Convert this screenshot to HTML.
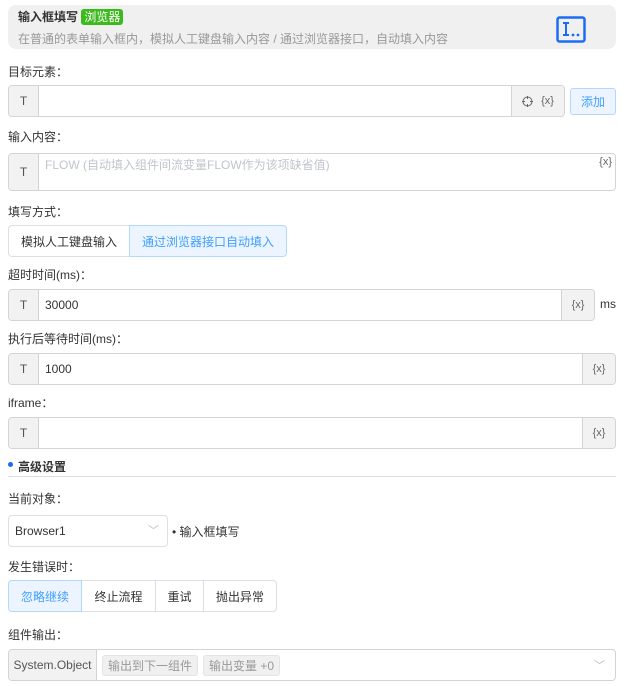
<!DOCTYPE html>
<html><head><meta charset="utf-8"><style>
*{box-sizing:border-box;margin:0;padding:0}
body{width:630px;height:686px;background:#fff;font-family:"Liberation Sans","Noto Sans CJK SC",sans-serif;font-size:12px;color:#333;position:relative;overflow:hidden}
.a{position:absolute}
.lbl{position:absolute;left:8px;font-size:12px;color:#333}
.inp{position:absolute;left:8px;border:1px solid #d4d4d4;border-radius:4px;height:32px;display:flex;align-items:center;background:#fff;overflow:hidden}
.t{width:30px;height:100%;background:#f2f2f2;border-right:1px solid #d4d4d4;display:flex;align-items:center;justify-content:center;color:#555;font-size:12px}
.ad{height:100%;background:#f2f2f2;border-left:1px solid #d4d4d4;display:flex;align-items:center;justify-content:center;color:#666;font-size:11px;position:absolute;right:0;top:0}
.v{padding-left:6px;color:#333}
.btn{position:absolute;height:32px;border:1px solid #dcdfe6;display:flex;align-items:center;justify-content:center;font-size:12px;color:#333;background:#fff}
.on{background:#ecf5ff;color:#409eff;border-color:#b3d8ff;z-index:1}
</style></head><body>
<div class="a" style="left:8px;top:5px;width:608px;height:44px;background:#f0f0f0;border-radius:8px"></div>
<div class="a" style="left:18px;top:9px;font-size:12px;font-weight:bold;color:#333;line-height:16px">输入框填写 <span style="background:#3cb91c;color:#fff;font-weight:normal;padding:1px 3px;border-radius:3px;font-size:12px">浏览器</span></div>
<div class="a" style="left:18px;top:30px;font-size:12px;color:#999">在普通的表单输入框内，模拟人工键盘输入内容 / 通过浏览器接口，自动填入内容</div>
<svg class="a" style="left:556px;top:16px" width="30" height="27" viewBox="0 0 30 27"><rect x="1.5" y="1.5" width="27" height="24" rx="2" fill="none" stroke="#1a6cf5" stroke-width="2.5"/><path d="M7 7h6M10 7v12M7 19h6" stroke="#1a6cf5" stroke-width="2" fill="none"/><circle cx="17" cy="19" r="1.4" fill="#1a6cf5"/><circle cx="22" cy="19" r="1.4" fill="#1a6cf5"/></svg>

<div class="lbl" style="top:63px">目标元素：</div>
<div class="inp" style="top:85px;width:557px"><div class="t">T</div><div class="ad" style="width:53px;gap:8px"><svg width="11" height="11" viewBox="0 0 11 11"><circle cx="5.5" cy="5.5" r="4.5" fill="none" stroke="#666"/><path d="M5.5 0v3M5.5 8v3M0 5.5h3M8 5.5h3" stroke="#666"/></svg><span>{x}</span></div></div>
<div class="btn" style="left:570px;top:88px;width:46px;height:27px;border-radius:3px;background:#ecf5ff;color:#409eff;border-color:#b3d8ff">添加</div>

<div class="lbl" style="top:128px">输入内容：</div>
<div class="inp" style="top:153px;width:608px;height:38px;align-items:stretch"><div class="t" style="height:auto">T</div><div style="padding:2px 6px;color:#c0c4cc">FLOW (自动填入组件间流变量FLOW作为该项缺省值)</div><div class="a" style="right:3px;top:2px;font-size:11px;color:#666">{x}</div></div>

<div class="lbl" style="top:203px">填写方式：</div>
<div class="btn" style="left:8px;top:225px;width:122px;border-radius:4px 0 0 4px">模拟人工键盘输入</div>
<div class="btn on" style="left:129px;top:225px;width:158px;border-radius:0 4px 4px 0">通过浏览器接口自动填入</div>

<div class="lbl" style="top:266px">超时时间(ms)：</div>
<div class="inp" style="top:289px;width:587px"><div class="t">T</div><div class="v">30000</div><div class="ad" style="width:33px">{x}</div></div>
<div class="a" style="left:600px;top:297px">ms</div>

<div class="lbl" style="top:330px">执行后等待时间(ms)：</div>
<div class="inp" style="top:353px;width:608px"><div class="t">T</div><div class="v">1000</div><div class="ad" style="width:33px">{x}</div></div>

<div class="lbl" style="top:394px">iframe：</div>
<div class="inp" style="top:417px;width:608px"><div class="t">T</div><div class="ad" style="width:33px">{x}</div></div>

<div class="a" style="left:8px;top:462px;width:5px;height:5px;border-radius:50%;background:#1a6cf5"></div>
<div class="a" style="left:18px;top:458px;font-weight:bold">高级设置</div>
<div class="a" style="left:8px;top:476px;width:608px;height:1px;background:#ddd"></div>

<div class="lbl" style="top:490px">当前对象：</div>
<div class="inp" style="top:515px;width:160px;border-radius:4px;border-color:#dcdfe6"><div class="v">Browser1</div><div class="a" style="right:8px;top:6px;color:#bbb;font-size:11px">﹀</div></div>
<div class="a" style="left:172px;top:523px">• 输入框填写</div>

<div class="lbl" style="top:558px">发生错误时：</div>
<div class="btn on" style="left:8px;top:580px;width:74px;border-radius:4px 0 0 4px">忽略继续</div>
<div class="btn" style="left:81px;top:580px;width:75px">终止流程</div>
<div class="btn" style="left:155px;top:580px;width:49px">重试</div>
<div class="btn" style="left:203px;top:580px;width:74px;border-radius:0 4px 4px 0">抛出异常</div>

<div class="lbl" style="top:626px">组件输出：</div>
<div class="inp" style="top:649px;width:608px"><div class="t" style="width:88px">System.Object</div>
<span style="margin-left:5px;background:#f0f0f0;border:1px solid #e4e4e4;border-radius:3px;padding:1px 5px;color:#999">输出到下一组件</span>
<span style="margin-left:5px;background:#f0f0f0;border:1px solid #e4e4e4;border-radius:3px;padding:1px 5px;color:#999">输出变量 +0</span>
<div class="a" style="right:10px;top:7px;color:#bbb;font-size:11px">﹀</div></div>
</body></html>
